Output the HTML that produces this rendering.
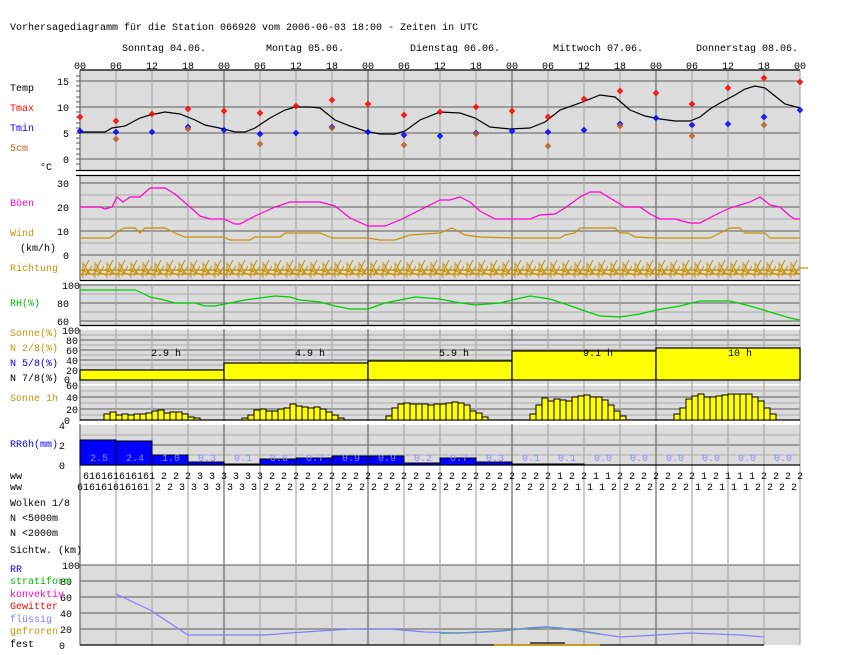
<!DOCTYPE html>
<html><head><meta charset="utf-8"><style>
html,body{margin:0;padding:0;background:#fff;width:850px;height:655px;overflow:hidden}
svg{display:block}
text{font-family:"Liberation Mono",monospace;font-size:10px}
</style></head><body>
<svg width="850" height="655" viewBox="0 0 850 655" xmlns="http://www.w3.org/2000/svg">
<defs>
<pattern id="rich" x="80" y="258" width="12" height="20" patternUnits="userSpaceOnUse">
<path d="M1,18 L9,2 M6,18 L12,8 M0,12 L12,16 M3,20 L3,4 M8,14 L4,6" stroke="#c8900a" stroke-width="1" fill="none"/>
</pattern>
<g id="dm"><path d="M0,-2.5 L2.5,0 L0,2.5 L-2.5,0 Z M0,-1.5 V1.5 M-1.5,0 H1.5" stroke="currentColor" stroke-width="1" fill="none"/></g>
</defs>
<g fill="#dcdcdc">
<rect x="80" y="70" width="720" height="100"/>
<rect x="80" y="176" width="720" height="104"/>
<rect x="80" y="284" width="720" height="41"/>
<rect x="80" y="330" width="720" height="90"/>
<rect x="80" y="425" width="720" height="40"/>
<rect x="80" y="565" width="720" height="80"/>
</g>
<rect x="80" y="384" width="720" height="1.5" fill="#fff"/>
<g stroke="#767676" stroke-width="1.2">
<path d="M80,81H800M80,107H800M80,133H800M80,159H800"/>
<path d="M80,183H800M80,207H800M80,231H800M80,255H800"/>
<path d="M80,285H800M80,303H800M80,321H800"/>
<path d="M80,340H800M80,350H800M80,360H800M80,370H800"/>
<path d="M80,397H800M80,409H800"/>
<path d="M80,445H800"/>
<path d="M80,565H800M80,581H800M80,597H800M80,613H800M80,629H800"/>
</g>
<g stroke="#aaaaaa" stroke-width="1">
<path d="M80,195H800M80,219H800M80,243H800M80,294H800M80,312H800M80,335H800M80,345H800M80,355H800M80,365H800M80,375H800M80,391H800M80,403H800M80,415H800M80,435H800M80,455H800"/>
</g>
<g stroke="#aaaaaa" stroke-width="1.2">
<path d="M116,70V645M152,70V645M188,70V645M260,70V645M296,70V645M332,70V645M404,70V645M440,70V645M476,70V645M548,70V645M584,70V645M620,70V645M692,70V645M728,70V645M764,70V645M800,70V645"/>
</g>
<g stroke="#666" stroke-width="1.2">
<path d="M224,70V565M368,70V565M512,70V565M656,70V565"/>
<path d="M224,565V645M368,565V645M512,565V645M656,565V645"/>
<path d="M80,70V645"/>
</g>
<rect x="76" y="171" width="724" height="4" fill="#fff"/>
<rect x="76" y="281" width="724" height="3" fill="#fff"/>
<rect x="76" y="326" width="724" height="3" fill="#fff"/>
<rect x="76" y="421" width="724" height="3" fill="#fff"/>
<g stroke="#000" stroke-width="1.3">
<path d="M80,70H800M76,170.5H800M76,175.5H800M80,280.5H800M80,325.5H800M80,420H800M80,465H800M80,645H764"/>
</g>
<g stroke="#555" stroke-width="1">
<path d="M76,76H80M76,81H80M76,86H80M76,91H80M76,97H80M76,102H80M76,107H80M76,112H80M76,117H80M76,123H80M76,128H80M76,133H80M76,138H80M76,143H80M76,149H80M76,154H80M76,159H80M76,164H80"/>
</g>
<text x="10" y="30">Vorhersagediagramm für die Station 066920 vom 2006-06-03 18:00 - Zeiten in UTC</text>
<g text-anchor="middle">
<text x="164" y="51">Sonntag 04.06.</text>
<text x="305" y="51">Montag 05.06.</text>
<text x="455" y="51">Dienstag 06.06.</text>
<text x="598" y="51">Mittwoch 07.06.</text>
<text x="747" y="51">Donnerstag 08.06.</text>
<text x="80" y="69">00</text><text x="116" y="69">06</text><text x="152" y="69">12</text><text x="188" y="69">18</text>
<text x="224" y="69">00</text><text x="260" y="69">06</text><text x="296" y="69">12</text><text x="332" y="69">18</text>
<text x="368" y="69">00</text><text x="404" y="69">06</text><text x="440" y="69">12</text><text x="476" y="69">18</text>
<text x="512" y="69">00</text><text x="548" y="69">06</text><text x="584" y="69">12</text><text x="620" y="69">18</text>
<text x="656" y="69">00</text><text x="692" y="69">06</text><text x="728" y="69">12</text><text x="764" y="69">18</text>
<text x="800" y="69">00</text>
</g>
<text x="10" y="91">Temp</text>
<text x="10" y="111" fill="#ff0000">Tmax</text>
<text x="10" y="131" fill="#0000ff">Tmin</text>
<text x="10" y="151" fill="#b86020">5cm</text>
<text x="40" y="170">°C</text>
<g text-anchor="end">
<text x="69" y="85">15</text><text x="69" y="111">10</text><text x="69" y="137">5</text><text x="69" y="163">0</text>
<text x="69" y="187">30</text><text x="69" y="211">20</text><text x="69" y="235">10</text><text x="69" y="259">0</text>
<text x="80" y="289">100</text><text x="69" y="307">80</text><text x="69" y="325">60</text>
<text x="80" y="334">100</text><text x="78" y="344">80</text><text x="78" y="354">60</text><text x="78" y="364">40</text><text x="78" y="374">20</text><text x="70" y="383">0</text>
<text x="78" y="389">60</text><text x="78" y="401">40</text><text x="78" y="413">20</text><text x="70" y="424">0</text>
<text x="65" y="429">4</text><text x="65" y="449">2</text><text x="65" y="469">0</text>
<text x="80" y="569">100</text><text x="72" y="585">80</text><text x="72" y="601">60</text><text x="72" y="617">40</text><text x="72" y="633">20</text><text x="65" y="649">0</text>
</g>
<text x="10" y="206" fill="#ff00cc">Böen</text>
<text x="10" y="236" fill="#c8900a">Wind</text>
<text x="20" y="251">(km/h)</text>
<text x="10" y="271" fill="#c8900a">Richtung</text>
<text x="10" y="306" fill="#00bb00">RH(%)</text>
<text x="10" y="336" fill="#c8900a">Sonne(%)</text>
<text x="10" y="351" fill="#c8900a">N 2/8(%)</text>
<text x="10" y="366" fill="#0000ff">N 5/8(%)</text>
<text x="10" y="381">N 7/8(%)</text>
<text x="10" y="401" fill="#c8900a">Sonne 1h</text>
<text x="10" y="447" fill="#0000ff">RR6h(mm)</text>
<text x="10" y="479">ww</text>
<text x="10" y="490">ww</text>
<text x="10" y="506">Wolken 1/8</text>
<text x="10" y="521">N &lt;5000m</text>
<text x="10" y="536">N &lt;2000m</text>
<text x="10" y="553">Sichtw. (km)</text>
<text x="10" y="572" fill="#0000ff">RR</text>
<text x="10" y="584" fill="#00bb00">stratiform</text>
<text x="10" y="597" fill="#ff00cc">konvektiv</text>
<text x="10" y="609" fill="#ff0000">Gewitter</text>
<text x="10" y="622" fill="#8080ff">flüssig</text>
<text x="10" y="634" fill="#c8900a">gefroren</text>
<text x="10" y="647">fest</text>
<polyline fill="none" stroke="#000" stroke-width="1.2" points="80,132 105,132 112,128 125,126 140,118 150,115 165,112 180,114 195,120 205,125 224,129 235,132 245,132 255,128 270,118 285,110 295,107 310,107 320,108 335,120 350,126 365,131 380,134 395,134 405,131 420,120 440,112 460,113 475,118 490,127 510,129 530,128 545,122 560,110 580,103 600,95 615,97 630,110 645,116 660,119 675,121 690,121 700,117 710,109 720,103 735,95 745,89 755,86 765,88 775,96 785,104 800,108"/>
<g color="#ff0000">
<use href="#dm" x="80" y="117"/><use href="#dm" x="116" y="121"/><use href="#dm" x="152" y="114"/><use href="#dm" x="188" y="109"/><use href="#dm" x="224" y="111"/><use href="#dm" x="260" y="113"/><use href="#dm" x="296" y="106"/><use href="#dm" x="332" y="100"/><use href="#dm" x="368" y="104"/><use href="#dm" x="404" y="115"/><use href="#dm" x="440" y="112"/><use href="#dm" x="476" y="107"/><use href="#dm" x="512" y="111"/><use href="#dm" x="548" y="117"/><use href="#dm" x="584" y="99"/><use href="#dm" x="620" y="91"/><use href="#dm" x="656" y="93"/><use href="#dm" x="692" y="104"/><use href="#dm" x="728" y="88"/><use href="#dm" x="764" y="78"/><use href="#dm" x="800" y="82"/>
</g>
<g color="#0000ff">
<use href="#dm" x="80" y="131"/><use href="#dm" x="116" y="132"/><use href="#dm" x="152" y="132"/><use href="#dm" x="188" y="127"/><use href="#dm" x="224" y="130"/><use href="#dm" x="260" y="134"/><use href="#dm" x="296" y="133"/><use href="#dm" x="332" y="127"/><use href="#dm" x="368" y="132"/><use href="#dm" x="404" y="135"/><use href="#dm" x="440" y="136"/><use href="#dm" x="476" y="133"/><use href="#dm" x="512" y="131"/><use href="#dm" x="548" y="132"/><use href="#dm" x="584" y="130"/><use href="#dm" x="620" y="124"/><use href="#dm" x="656" y="118"/><use href="#dm" x="692" y="125"/><use href="#dm" x="728" y="124"/><use href="#dm" x="764" y="117"/><use href="#dm" x="800" y="110"/>
</g>
<g color="#b86020">
<use href="#dm" x="116" y="139"/><use href="#dm" x="188" y="129"/><use href="#dm" x="260" y="144"/><use href="#dm" x="332" y="128"/><use href="#dm" x="404" y="145"/><use href="#dm" x="476" y="134"/><use href="#dm" x="548" y="146"/><use href="#dm" x="620" y="126"/><use href="#dm" x="692" y="136"/><use href="#dm" x="764" y="125"/>
</g>
<polyline fill="none" stroke="#ff00cc" stroke-width="1.2" points="80,207 100,207 105,209 112,207 117,197 123,202 130,197 140,197 150,188 165,188 175,194 190,207 200,216 210,219 224,219 235,224 240,224 255,216 275,207 290,202 320,202 335,206 350,218 368,226 385,226 400,220 420,210 440,200 450,200 460,197 470,202 480,211 495,219 512,219 530,219 540,215 555,214 565,208 580,197 590,192 600,192 610,198 625,207 640,207 650,214 660,219 675,219 690,223 700,223 715,215 730,208 750,202 760,197 770,205 780,207 790,216 795,219 800,219"/>
<polyline fill="none" stroke="#c8900a" stroke-width="1.2" points="80,238 110,238 120,230 125,228 135,228 140,233 145,228 165,228 175,233 185,237 224,237 230,240 250,240 255,237 280,237 285,233 320,233 332,238 368,238 380,240 395,240 410,235 440,233 452,228 465,235 480,237 512,238 560,238 565,235 575,233 580,228 615,228 620,233 628,233 635,237 656,238 710,238 720,233 730,228 740,228 745,233 765,233 770,238 800,238"/>
<rect x="80" y="260" width="720" height="18" fill="url(#rich)"/>
<path d="M80,274H800M80,270H800M800,268H808" stroke="#c8900a" stroke-width="1.2"/>
<polyline fill="none" stroke="#00cc00" stroke-width="1.2" points="80,290 135,290 140,292 150,297 160,299 175,303 195,303 205,306 215,306 230,303 245,300 260,298 275,296 290,297 300,300 320,302 335,306 350,309 368,309 385,303 400,300 415,297 440,299 455,302 475,305 500,303 512,300 530,296 550,299 565,304 585,311 600,316 620,317 640,314 656,310 680,306 700,301 730,301 750,306 770,312 790,318 800,320"/>
<g fill="#ffff00" stroke="#000" stroke-width="1.2">
<rect x="80" y="370" width="144" height="10"/>
<rect x="224" y="363" width="144" height="17"/>
<rect x="368" y="361" width="144" height="19"/>
<rect x="512" y="351" width="144" height="29"/>
<rect x="656" y="348" width="144" height="32"/>
</g>
<g text-anchor="middle">
<text x="166" y="356">2.9 h</text><text x="310" y="356">4.9 h</text><text x="454" y="356">5.9 h</text><text x="598" y="356">9.1 h</text><text x="740" y="356">10 h</text>
</g>
<path fill="#ffff00" stroke="#000" stroke-width="1" d="
M104,420V414h6V420ZM110,420V412h6V420ZM116,420V415h6V420ZM122,420V414h6V420ZM128,420V415h6V420ZM134,420V414h6V420ZM140,420V414h6V420ZM146,420V413h6V420ZM152,420V411h6V420ZM158,420V410h6V420ZM164,420V413h6V420ZM170,420V412h6V420ZM176,420V412h6V420ZM182,420V414h6V420ZM188,420V417h6V420ZM194,420V418h6V420Z
M242,420V418h6V420ZM248,420V415h6V420ZM254,420V410h6V420ZM260,420V409h6V420ZM266,420V411h6V420ZM272,420V411h6V420ZM278,420V409h6V420ZM284,420V408h6V420ZM290,420V404h6V420ZM296,420V406h6V420ZM302,420V407h6V420ZM308,420V408h6V420ZM314,420V407h6V420ZM320,420V409h6V420ZM326,420V412h6V420ZM332,420V415h6V420ZM338,420V418h6V420Z
M386,420V416h6V420ZM392,420V408h6V420ZM398,420V404h6V420ZM404,420V403h6V420ZM410,420V404h6V420ZM416,420V404h6V420ZM422,420V404h6V420ZM428,420V405h6V420ZM434,420V404h6V420ZM440,420V404h6V420ZM446,420V403h6V420ZM452,420V402h6V420ZM458,420V403h6V420ZM464,420V405h6V420ZM470,420V411h6V420ZM476,420V413h6V420ZM482,420V417h6V420Z
M530,420V414h6V420ZM536,420V405h6V420ZM542,420V398h6V420ZM548,420V401h6V420ZM554,420V399h6V420ZM560,420V400h6V420ZM566,420V401h6V420ZM572,420V397h6V420ZM578,420V396h6V420ZM584,420V395h6V420ZM590,420V397h6V420ZM596,420V397h6V420ZM602,420V400h6V420ZM608,420V405h6V420ZM614,420V411h6V420ZM620,420V416h6V420Z
M674,420V414h6V420ZM680,420V408h6V420ZM686,420V399h6V420ZM692,420V396h6V420ZM698,420V394h6V420ZM704,420V397h6V420ZM710,420V397h6V420ZM716,420V396h6V420ZM722,420V395h6V420ZM728,420V394h6V420ZM734,420V394h6V420ZM740,420V394h6V420ZM746,420V394h6V420ZM752,420V397h6V420ZM758,420V401h6V420ZM764,420V408h6V420ZM770,420V414h6V420Z"/>
<g fill="#0000ff" stroke="#000" stroke-width="1">
<rect x="80" y="440" width="36" height="25"/><rect x="116" y="441" width="36" height="24"/><rect x="152" y="455" width="36" height="10"/><rect x="188" y="462" width="36" height="3"/>
<rect x="224" y="464" width="36" height="1"/><rect x="260" y="459" width="36" height="6"/><rect x="296" y="458" width="36" height="7"/><rect x="332" y="456" width="36" height="9"/>
<rect x="368" y="456" width="36" height="9"/><rect x="404" y="463" width="36" height="2"/><rect x="440" y="458" width="36" height="7"/><rect x="476" y="462" width="36" height="3"/>
<rect x="512" y="464" width="36" height="1"/><rect x="548" y="464" width="36" height="1"/>
</g>
<g fill="#8c8cff" text-anchor="middle">
<text x="99" y="461">2.5</text><text x="135" y="461">2.4</text><text x="171" y="461">1.0</text><text x="207" y="461">0.3</text>
<text x="243" y="461">0.1</text><text x="279" y="461">0.6</text><text x="315" y="461">0.7</text><text x="351" y="461">0.9</text>
<text x="387" y="461">0.9</text><text x="423" y="461">0.2</text><text x="459" y="461">0.7</text><text x="495" y="461">0.3</text>
<text x="531" y="461">0.1</text><text x="567" y="461">0.1</text><text x="603" y="461">0.0</text><text x="639" y="461">0.0</text>
<text x="675" y="461">0.0</text><text x="711" y="461">0.0</text><text x="747" y="461">0.0</text><text x="783" y="461">0.0</text>
</g>
<text x="83" y="479" textLength="720" lengthAdjust="spacing" style="white-space:pre">616161616161 2 2 2 3 3 3 3 3 3 2 2 2 2 2 2 2 2 2 2 2 2 2 2 2 2 2 2 2 2 2 2 2 2 1 2 2 1 1 2 2 2 2 2 2 2 1 2 1 1 1 2 2 2 2</text>
<text x="77" y="490" textLength="720" lengthAdjust="spacing" style="white-space:pre">616161616161 2 2 3 3 3 3 3 3 3 2 2 2 2 2 2 2 2 2 2 2 2 2 2 2 2 2 2 2 2 2 2 2 2 2 2 1 1 1 2 2 2 2 2 2 2 1 2 1 1 1 2 2 2 2</text>
<path d="M494,645H600" stroke="#c8900a" stroke-width="1.5"/>
<path d="M530,643H565" stroke="#000" stroke-width="1.2"/>
<polyline fill="none" stroke="#00cc00" stroke-width="1.5" points="440,633 458,633 483,632 500,631 530,628 545,627 560,628 580,631 600,634"/>
<polyline fill="none" stroke="#8080ff" stroke-width="1.2" points="116,594 150,610 188,635 265,635 290,633 320,631 350,629 390,629 425,632 458,633 483,632 500,631 530,628 545,627 560,628 580,631 600,634 620,637 640,636 690,633 740,635 764,637"/>
</svg>
</body></html>
